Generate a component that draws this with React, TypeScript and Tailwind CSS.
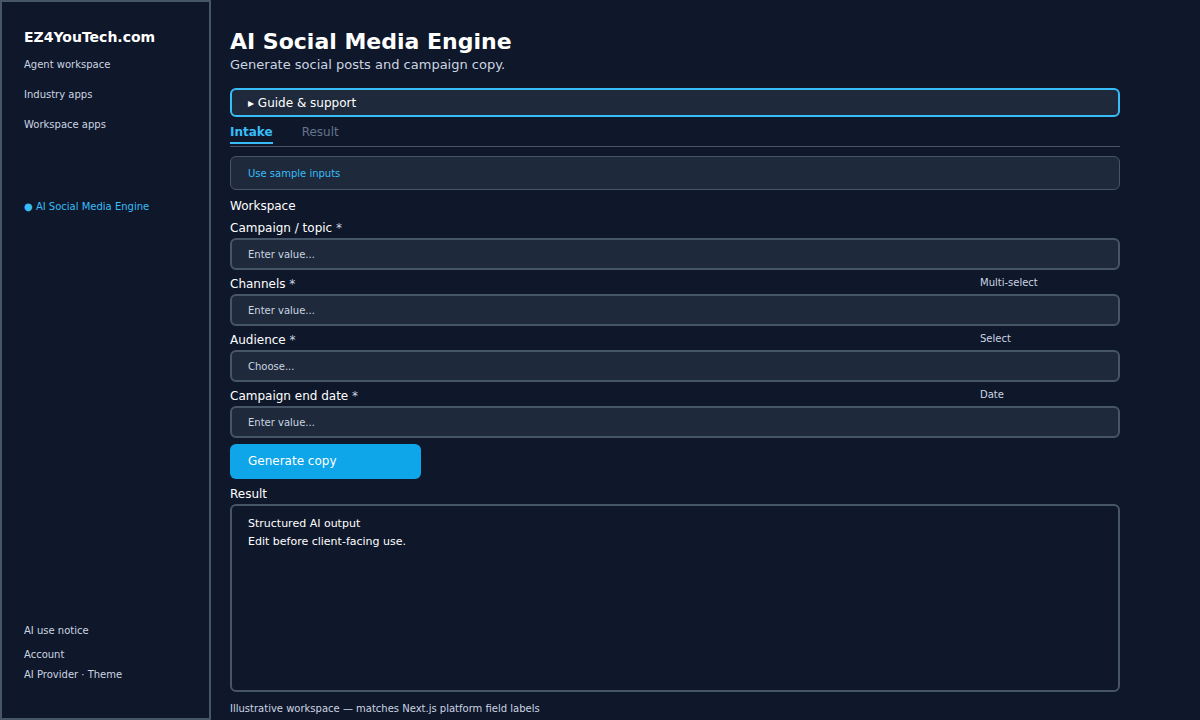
const fields = [
  { label: 'Campaign / topic', hint: '', placeholder: 'Enter value...' },
  { label: 'Channels', hint: 'Multi-select', placeholder: 'Enter value...' },
  { label: 'Audience', hint: 'Select', placeholder: 'Choose...' },
  { label: 'Campaign end date', hint: 'Date', placeholder: 'Enter value...' },
];

function Sidebar() {
  return (
    <aside className="w-[211px] h-[720px] shrink-0 border-2 border-[#475569] bg-[#0f172a] pl-[22px] pt-[26px] pb-[36px] flex flex-col">
      <div className="text-[14px] leading-[18px] font-bold text-white">EZ4YouTech.com</div>
      <nav className="mt-[12px] flex flex-col gap-[16px] text-[10px] leading-[14px] text-[#cbd5e1]">
        <span>Agent workspace</span>
        <span>Industry apps</span>
        <span>Workspace apps</span>
      </nav>
      <div className="mt-[68px] text-[10px] leading-[14px] text-[#38bdf8]">● AI Social Media Engine</div>
      <div className="mt-auto flex flex-col text-[10px] leading-[14px] text-[#cbd5e1]">
        <span>AI use notice</span>
        <span className="mt-[10px]">Account</span>
        <span className="mt-[6px]">AI Provider · Theme</span>
      </div>
    </aside>
  );
}

export default function App() {
  return (
    <div
      className="w-[1200px] h-[720px] bg-[#0f172a] flex overflow-hidden"
      style={{ fontFamily: '"DejaVu Sans", "Liberation Sans", sans-serif' }}
    >
      <Sidebar />
      <main className="w-[890px] ml-[19px] pt-[29px] flex flex-col">
        <h1 className="text-[22px] leading-[26px] font-bold text-white">AI Social Media Engine</h1>
        <p className="text-[13px] leading-[19px] text-[#cbd5e1]">Generate social posts and campaign copy.</p>

        <div className="mt-[14px] h-[29px] rounded-md border-2 border-[#38bdf8] bg-[#1e293b] pl-[16px] pt-[1px] flex items-center text-[12px] text-white">
          ▸ Guide &amp; support
        </div>

        <div className="mt-[7px] flex gap-[29px] border-b border-[#475569] pb-[2px]">
          <span className="text-[12px] leading-[16px] font-bold text-[#38bdf8] border-b-2 border-[#38bdf8] pb-[2px]">Intake</span>
          <span className="text-[12px] leading-[16px] text-[#64748b] pb-[4px]">Result</span>
        </div>

        <div className="mt-[9px] h-[34px] rounded-md border border-[#475569] bg-[#1e293b] pl-[17px] flex items-center text-[10px] text-[#38bdf8]">
          Use sample inputs
        </div>

        <div className="mt-[8px] text-[12px] leading-[16px] text-white">Workspace</div>

        {fields.map((f) => (
          <div key={f.label} className="flex flex-col">
            <div className="mt-[6px] h-[16px] flex items-center justify-between">
              <span className="text-[12px] leading-[16px] text-white">
                {f.label} <span className="text-[#cbd5e1]">*</span>
              </span>
              {f.hint && <span className="w-[140px] text-[10px] text-[#cbd5e1] -mt-[3px]">{f.hint}</span>}
            </div>
            <div className="mt-[2px] h-[32px] rounded-md border-2 border-[#475569] bg-[#1e293b] pl-[16px] flex items-center text-[10px] text-[#cbd5e1]">
              {f.placeholder}
            </div>
          </div>
        ))}

        <button className="mt-[6px] w-[191px] h-[35px] rounded-md bg-[#0ea5e9] pl-[18px] pb-[2px] text-left text-[12px] text-white">
          Generate copy
        </button>

        <div className="mt-[7px] text-[12px] leading-[16px] text-white">Result</div>
        <div className="mt-[2px] h-[188px] rounded-md border-2 border-[#475569] pl-[16px] pt-[9px] text-[11px] leading-[18px] text-white">
          <div>Structured AI output</div>
          <div>Edit before client-facing use.</div>
        </div>

        <div className="mt-[9px] text-[10px] leading-[16px] text-[#cbd5e1]">
          Illustrative workspace — matches Next.js platform field labels
        </div>
      </main>
    </div>
  );
}
